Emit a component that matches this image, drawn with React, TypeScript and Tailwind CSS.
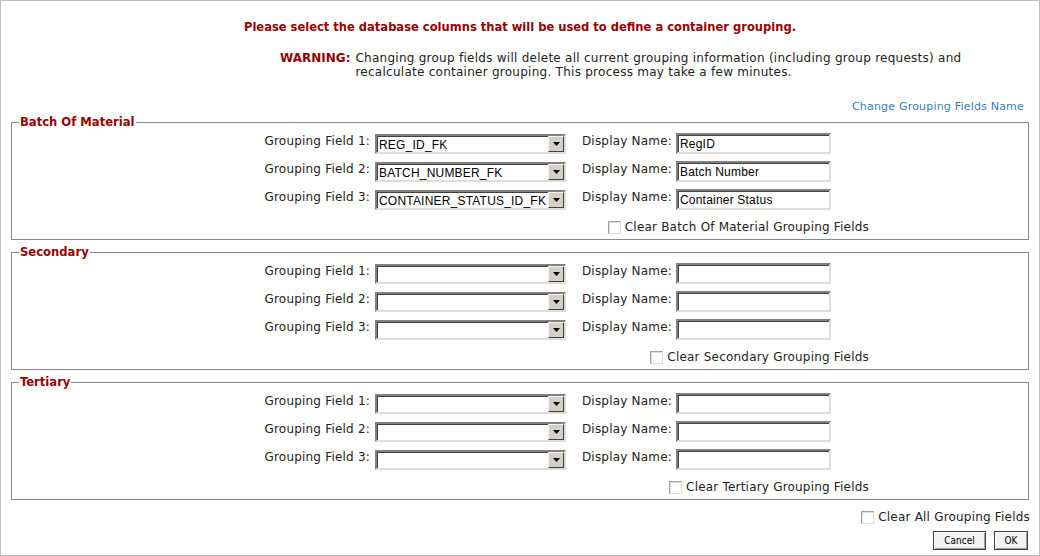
import React from "react";

const RED = "text-[#990000]";

function SelectBox({ value }: { value: string }) {
  return (
    <div className="relative w-[191px] h-[20px] bg-white border-2 border-t-[#808080] border-l-[#808080] border-b-[#e0ddd8] border-r-[#e0ddd8] shadow-[inset_1px_1px_0_#404040]">
      <div className="pl-[2px] pr-[20px] pt-[1px] leading-[16px] text-[12px] font-['Liberation_Sans',Arial,sans-serif] text-black whitespace-nowrap overflow-hidden">
        {value}
      </div>
      <div className="absolute right-0 top-0 w-[16px] h-[16px] bg-[#d4d0c8] border border-t-[#f4f4f4] border-l-[#f4f4f4] border-b-[#404040] border-r-[#404040] flex items-center justify-center">
        <svg width="7" height="4" viewBox="0 0 7 4" className="mt-[1px]">
          <path d="M0 0h7L3.5 4z" fill="#000" />
        </svg>
      </div>
    </div>
  );
}

function TextBox({ value }: { value: string }) {
  return (
    <div className="w-[155px] h-[21px] bg-white border-2 border-t-[#808080] border-l-[#808080] border-b-[#e0ddd8] border-r-[#e0ddd8] shadow-[inset_1px_1px_0_#404040]">
      <div className="pl-[2px] pt-[1px] leading-[16px] text-[12px] font-['Liberation_Sans',Arial,sans-serif] text-black whitespace-nowrap overflow-hidden">
        {value}
      </div>
    </div>
  );
}

function Check() {
  return (
    <span className="inline-block w-[13px] h-[13px] bg-white border border-t-[#a0a0a0] border-l-[#a0a0a0] border-b-[#dcdcdc] border-r-[#dcdcdc] shadow-[inset_1px_1px_0_#dcdcdc]" />
  );
}

function Group({
  title,
  values,
  names,
}: {
  title: string;
  values: string[];
  names: string[];
}) {
  return (
    <fieldset className="ml-[10px] w-[1018px] border border-[#888888] pb-[4px]">
      <legend className={`ml-[7px] px-[1px] leading-[16px] font-bold text-[12.9px] tracking-normal ${RED} font-['DejaVu_Sans_Condensed','DejaVu_Sans',sans-serif]`}>
        {title}
      </legend>
      <div className="flex flex-col gap-[7px] pt-[3px]">
        {[0, 1, 2].map((i) => (
          <div key={i} className="flex items-center h-[21px]">
            <div className="w-[358px] text-right whitespace-nowrap leading-[14px] -mt-[6px]">
              Grouping Field {i + 1}:
            </div>
            <div className="ml-[5px]">
              <SelectBox value={values[i]} />
            </div>
            <div className="w-[106px] text-right whitespace-nowrap leading-[14px] -mt-[6px]">
              Display Name:
            </div>
            <div className="ml-[4px]">
              <TextBox value={names[i]} />
            </div>
          </div>
        ))}
      </div>
      <div className="w-[857px] flex justify-end items-center gap-[4px] mt-[9px] h-[16px]">
        <Check />
        <span className="whitespace-nowrap">Clear {title} Grouping Fields</span>
      </div>
    </fieldset>
  );
}

export default function App() {
  return (
    <div className="w-[1040px] h-[556px] border border-[#c0c0c0] bg-white text-[12px] tracking-[0.2px] text-[#222222] font-['DejaVu_Sans',Verdana,sans-serif] overflow-hidden">
      <div className={`pt-[18px] text-center font-bold leading-[16px] text-[12.8px] ${RED} font-['DejaVu_Sans_Condensed','DejaVu_Sans',sans-serif] tracking-normal`}>
        Please select the database columns that will be used to define a container grouping.
      </div>
      <div className="mt-[16px] pl-[279px] flex leading-[14px]">
        <div className={`font-bold ${RED} font-['DejaVu_Sans',sans-serif] tracking-normal whitespace-nowrap`}>
          WARNING:
        </div>
        <div className="ml-[5px] whitespace-nowrap tracking-[0.26px]">
          Changing group fields will delete all current grouping information (including group requests) and
          <br />
          recalculate container grouping. This process may take a few minutes.
        </div>
      </div>
      <div className="mt-[21px] pr-[15px] text-right leading-[14px] text-[11px] text-[#3a7bbf]">
        Change Grouping Fields Name
      </div>
      <div className="mt-0 flex flex-col gap-[4px]">
        <Group
          title="Batch Of Material"
          values={["REG_ID_FK", "BATCH_NUMBER_FK", "CONTAINER_STATUS_ID_FK"]}
          names={["RegID", "Batch Number", "Container Status"]}
        />
        <Group title="Secondary" values={["", "", ""]} names={["", "", ""]} />
        <Group title="Tertiary" values={["", "", ""]} names={["", "", ""]} />
      </div>
      <div className="mt-[9px] pr-[9px] flex justify-end items-center gap-[4px] h-[16px]">
        <Check />
        <span className="whitespace-nowrap">Clear All Grouping Fields</span>
      </div>
      <div className="mt-[6px] pr-[11px] flex justify-end gap-[8px]">
        <button className="w-[53px] h-[19px] border border-[#404040] bg-[#f2f2f2] shadow-[inset_1px_1px_0_#ffffff,inset_-1px_-1px_0_#a0a0a0] text-[10px] leading-[14px] tracking-normal text-black font-['DejaVu_Sans_Condensed','DejaVu_Sans',sans-serif]">
          Cancel
        </button>
        <button className="w-[34px] h-[19px] border border-[#404040] bg-[#f2f2f2] shadow-[inset_1px_1px_0_#ffffff,inset_-1px_-1px_0_#a0a0a0] text-[10px] leading-[14px] tracking-normal text-black font-['DejaVu_Sans_Condensed','DejaVu_Sans',sans-serif]">
          OK
        </button>
      </div>
    </div>
  );
}
